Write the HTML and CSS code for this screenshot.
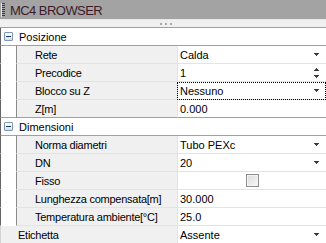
FILE: index.html
```html
<!DOCTYPE html>
<html>
<head>
<meta charset="utf-8">
<link rel="stylesheet" href="styles.css">
</head>
<body>
<div class="panel">
  <div class="titlebar"><span class="grip"></span><span class="title">MC4 BROWSER</span></div>
  <div class="splitter"><span class="dot"></span><span class="dot"></span><span class="dot"></span></div>
  <div class="grid">
    <div class="section"><span class="toggle"><span class="minus"></span></span><span>Posizione</span></div>
    <div class="row"><div class="indent"></div><div class="name">Rete</div><div class="value"><span>Calda</span><svg class="arrow" width="5" height="3"><path d="M0 0h5v1H0zM1 1h3v1H1zM2 2h1v1H2z"/></svg></div></div>
    <div class="row"><div class="indent"></div><div class="name">Precodice</div><div class="value"><span>1</span><span class="spin"><svg width="5" height="3"><path d="M2 0h1v1H2zM1 1h3v1H1zM0 2h5v1H0z"/></svg><svg width="5" height="3"><path d="M0 0h5v1H0zM1 1h3v1H1zM2 2h1v1H2z"/></svg></span></div></div>
    <div class="row"><div class="indent"></div><div class="name">Blocco su Z</div><div class="value focus"><span>Nessuno</span><svg class="arrow" width="5" height="3"><path d="M0 0h5v1H0zM1 1h3v1H1zM2 2h1v1H2z"/></svg></div></div>
    <div class="row last"><div class="indent"></div><div class="name">Z[m]</div><div class="value"><span>0.000</span></div></div>
    <div class="section"><span class="toggle"><span class="minus"></span></span><span>Dimensioni</span></div>
    <div class="row"><div class="indent"></div><div class="name">Norma diametri</div><div class="value"><span>Tubo PEXc</span><svg class="arrow" width="5" height="3"><path d="M0 0h5v1H0zM1 1h3v1H1zM2 2h1v1H2z"/></svg></div></div>
    <div class="row"><div class="indent"></div><div class="name">DN</div><div class="value"><span>20</span><svg class="arrow" width="5" height="3"><path d="M0 0h5v1H0zM1 1h3v1H1zM2 2h1v1H2z"/></svg></div></div>
    <div class="row"><div class="indent"></div><div class="name">Fisso</div><div class="value center"><span class="check"></span></div></div>
    <div class="row"><div class="indent"></div><div class="name">Lunghezza compensata[m]</div><div class="value"><span>30.000</span></div></div>
    <div class="row"><div class="indent"></div><div class="name">Temperatura ambiente[°C]</div><div class="value"><span>25.0</span></div></div>
    <div class="row top"><div class="name">Etichetta</div><div class="value"><span>Assente</span><svg class="arrow" width="5" height="3"><path d="M0 0h5v1H0zM1 1h3v1H1zM2 2h1v1H2z"/></svg></div></div>
  </div>
</div>
</body>
</html>
```
FILE: styles.css
```css
html, body {
  margin: 0;
  padding: 0;
  background: #ffffff;
}
body {
  width: 326px;
  height: 243px;
  overflow: hidden;
  font-family: "Liberation Sans", Arial, sans-serif;
  font-size: 11px;
  color: #000;
}
.panel {
  width: 326px;
}
.titlebar {
  height: 19px;
  background: #a3a3a3;
  display: flex;
  align-items: center;
  padding-left: 1px;
}
.grip {
  width: 3px;
  height: 14px;
  background: repeating-linear-gradient(to bottom, #3a3a3a 0 1px, transparent 1px 2px);
  border-left: 1px solid #e8e8e8;
  margin-top: 1px;
}
.title {
  margin-left: 5px;
  margin-top: 1px;
  font-size: 13px;
  letter-spacing: -0.55px;
  color: #3d1b2a;
}
.splitter {
  height: 7px;
  background: #f0f0f0;
  border-top: 1px solid #e8e8e8;
  border-bottom: 1px solid #a0a0a0;
  display: flex;
  justify-content: center;
  align-items: center;
  gap: 3px;
  padding-left: 5px;
  box-sizing: content-box;
}
.splitter .dot {
  width: 2px;
  height: 2px;
  background: #a8a8a8;
}
.grid {
  display: flex;
  flex-direction: column;
}
.section {
  height: 17px;
  border-left: 1px solid #646464;
  border-bottom: 1px solid #a0a0a0;
  background: #fff;
  display: flex;
  align-items: center;
  padding-left: 3px;
}
.toggle {
  width: 7px;
  height: 7px;
  border: 1px solid #7b98b6;
  border-radius: 1px;
  background: linear-gradient(#ffffff, #d6e0ea);
  margin-right: 6px;
  display: flex;
  align-items: center;
  justify-content: center;
}
.minus {
  width: 5px;
  height: 1px;
  background: #1f3a5c;
}
.row {
  display: grid;
  grid-template-columns: 17px 160px 1fr;
  height: 18px;
}
.row.top {
  grid-template-columns: 177px 1fr;
}
.indent {
  border-left: 1px solid #646464;
  border-right: 1px solid #8a8a8a;
  border-bottom: 1px solid #ffffff;
  background: #fff;
}
.name {
  background: #f0f0f0;
  border-bottom: 1px solid #e3e3e3;
  padding-left: 18px;
  display: flex;
  align-items: center;
  letter-spacing: -0.25px;
  white-space: nowrap;
  overflow: hidden;
}
.row.top .name {
  padding-left: 17px;
  border-left: 1px solid #d4d4d4;
}
.value {
  background: #fff;
  border-left: 1px solid #e3e3e3;
  border-bottom: 1px solid #e3e3e3;
  padding-left: 2px;
  padding-right: 7px;
  display: flex;
  align-items: center;
  justify-content: space-between;
}
.row.last .indent,
.row.last .name,
.row.last .value {
  border-bottom-color: #a0a0a0;
}
.value.center {
  justify-content: center;
  padding-right: 0;
  padding-left: 0;
}
.value.focus {
  outline: 1px dotted #000;
  outline-offset: -1px;
}
.arrow path, .spin path {
  fill: #3c3c3c;
}
.spin {
  display: flex;
  flex-direction: column;
  gap: 4px;
}
.spin svg, .arrow {
  display: block;
}
.check {
  width: 11px;
  height: 11px;
  border: 1px solid #8e8f8f;
  background: linear-gradient(135deg, #dcdcdc, #f7f7f7);
  box-shadow: inset 0 0 0 1px #f4f4f4;
}
```
